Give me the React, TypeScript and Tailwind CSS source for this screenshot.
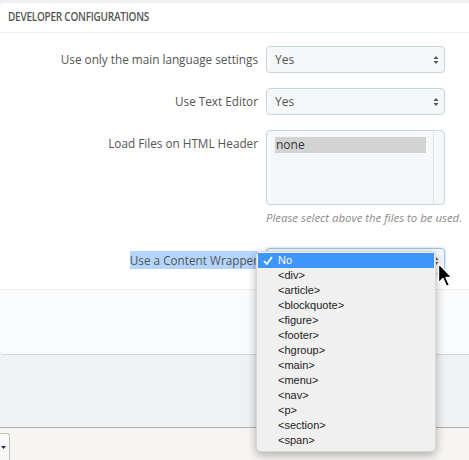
import React from 'react';

const options = ['<div>', '<article>', '<blockquote>', '<figure>', '<footer>', '<hgroup>', '<main>', '<menu>', '<nav>', '<p>', '<section>', '<span>'];

function SelectArrows() {
  return (
    <svg width="6" height="10" viewBox="0 0 6 10" className="absolute right-[5px] top-1/2 -translate-y-1/2">
      <path d="M3 1 L5.5 4 H0.5 Z" fill="#555" />
      <path d="M3 9 L5.5 6 H0.5 Z" fill="#555" />
    </svg>
  );
}

function FakeSelect({ value, className = '' }: { value: string; className?: string }) {
  return (
    <div className={`relative w-[179px] h-[27px] rounded-[4px] border border-[#c7d6db] bg-[#f5f8f9] flex items-center pl-[8px] text-[12px] text-[#555] ${className}`}>
      {value}
      <SelectArrows />
    </div>
  );
}

function Row({ label, children, top = false, highlight = false }: { label: string; children: React.ReactNode; top?: boolean; highlight?: boolean }) {
  return (
    <div className={`flex ${top ? 'items-start' : 'items-center'}`}>
      <div className={`w-[258px] shrink-0 text-right text-[11.75px] text-[#555] ${top ? 'pt-[5px]' : ''}`}>
        <span className={highlight ? 'bg-[#b4d5fe] py-[1px]' : ''}>{label}</span>
      </div>
      <div className="ml-[8px]">{children}</div>
    </div>
  );
}

export default function App() {
  return (
    <div className="relative w-[469px] h-[460px] overflow-hidden bg-[#eff1f2] pt-[3px] flex flex-col" style={{ fontFamily: '"Open Sans", sans-serif' }}>
      {/* Panel */}
      <div className="w-[480px] bg-white rounded-[4px] shadow-[0_1px_1px_rgba(0,0,0,0.12)]">
        <div className="h-[30px] border-b border-[#eeeeee] px-[8px] flex items-center">
          <span className="block origin-left scale-x-[0.8] whitespace-nowrap text-[12.5px] font-semibold text-[#555] tracking-[-0.3px] uppercase">
            Developer configurations
          </span>
        </div>

        <div className="pt-[13px] pb-[15px] flex flex-col">
          <Row label="Use only the main language settings">
            <FakeSelect value="Yes" />
          </Row>
          <div className="h-[15px]" />
          <Row label="Use Text Editor">
            <FakeSelect value="Yes" className="h-[26px]" />
          </Row>
          <div className="h-[15px]" />
          <Row label="Load Files on HTML Header" top>
            <div>
              <div className="relative w-[179px] h-[75px] rounded-[4px] border border-[#c7d6db] bg-[#f5f8f9] pt-[6px] pl-[8px] pr-[18px]">
                <div className="h-[16px] bg-[#d3d3d3] text-[12px] text-[#333] pl-[1px] leading-[16px]">none</div>
                <div className="absolute right-[10px] top-0 bottom-0 border-l border-[#dde3e5]" />
              </div>
              <div className="mt-[5px] text-[11.4px] italic text-[#8a8a8a] whitespace-nowrap leading-[16px]">
                Please select above the files to be used.
              </div>
            </div>
          </Row>
          <div className="h-[22px]" />
          <Row label="Use a Content Wrapper" highlight>
            <div className="relative w-[179px] h-[26px] rounded-[4px] border border-[#9ec3e6] bg-[#f5f8f9] shadow-[0_0_3px_rgba(100,160,230,0.5)]">
              <SelectArrows />
            </div>
          </Row>
        </div>

        {/* footer */}
        <div className="h-[65px] border-t border-[#eeeeee] bg-[#fafbfc] rounded-b-[4px]" />
      </div>

      <div className="flex-1" />

      {/* bottom bar */}
      <div className="h-[33px] border-t border-[#a8afbc] bg-[#f6f5f2] pt-[5px]">
        <div className="relative w-[10px] h-full border-r border-t border-[#c3c3c3] rounded-tr-[3px] bg-[#f8f8f6]">
          <svg width="5" height="3" viewBox="0 0 5 3" className="absolute left-[1px] top-[12px]">
            <path d="M0 0 H5 L2.5 3 Z" fill="#1f2a4a" />
          </svg>
        </div>
      </div>

      {/* dropdown popup */}
      <div className="absolute left-[256px] top-[251px] w-[180px] h-[201px] rounded-[5px] bg-[#f0f0f0] shadow-[0_3px_10px_rgba(0,0,0,0.3)] border border-[#d8d8d8] pt-[1px] px-[1px]" style={{ fontFamily: '"Liberation Sans", Arial, sans-serif' }}>
        <div className="relative h-[15px] bg-[#3e95fa] text-white text-[11px] leading-[15px] pl-[20px]">
          <svg width="10" height="9" viewBox="0 0 10 9" className="absolute left-[5px] top-[3px]">
            <path d="M1 5 L3.8 8 L9 1" stroke="white" strokeWidth="1.8" fill="none" />
          </svg>
          No
        </div>
        {options.map((o) => (
          <div key={o} className="h-[15px] text-[11px] leading-[15px] text-[#222] pl-[20px]">
            {o}
          </div>
        ))}
      </div>

      {/* mouse cursor */}
      <svg width="20" height="28" viewBox="0 0 20 28" className="absolute left-[437px] top-[262px]">
        <path d="M1.5 1.5 L1.5 21 L6 16.5 L9.5 24.5 L12.5 23.2 L9 15.5 L15 15.5 Z" fill="black" stroke="white" strokeWidth="1.4" strokeLinejoin="round" />
      </svg>
    </div>
  );
}
